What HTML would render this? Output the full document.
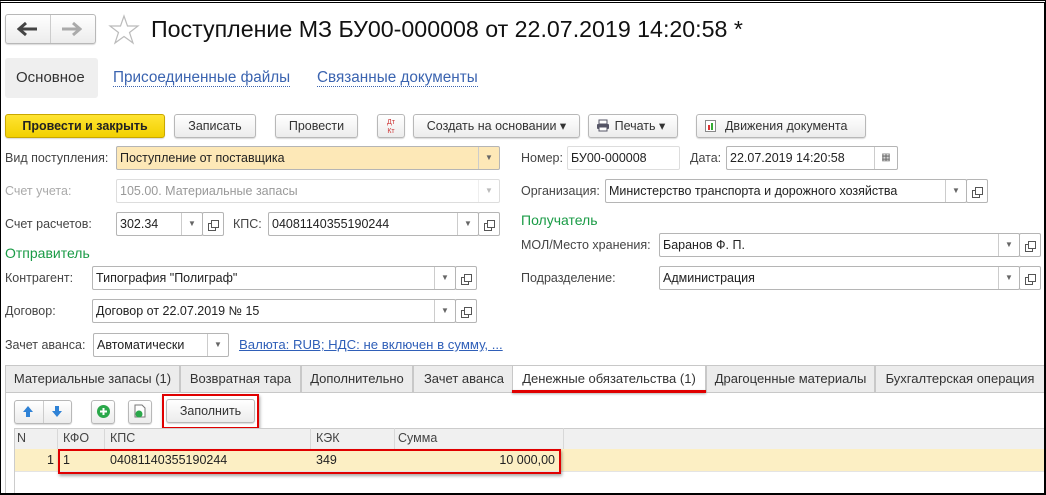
<!DOCTYPE html>
<html><head><meta charset="utf-8"><style>
*{box-sizing:border-box;margin:0;padding:0}
body{width:1046px;height:495px;overflow:hidden;background:#fff;font-family:"Liberation Sans",Arial,sans-serif;font-size:12.5px;color:#333;position:relative}
.a{position:absolute;white-space:nowrap}
.frame{position:absolute;left:0;top:0;width:1046px;height:495px;border:1px solid #000;border-top:3px double #000;border-right:2px solid #000;border-bottom:2px solid #000;pointer-events:none}
.btn{position:absolute;height:24px;border:1px solid #b8b8b8;border-radius:3px;background:linear-gradient(#fff,#ececec);box-shadow:0 1px 1px rgba(0,0,0,.15);text-align:center;line-height:22px;color:#333}
.fld{position:absolute;height:24px;border:1px solid #b5b5b5;border-radius:2px;background:#fff;line-height:22px;padding-left:3px;color:#222}
.dd{position:absolute;top:0;bottom:0;width:21px;border-left:1px solid #ccc;text-align:center;font-size:8px;line-height:22px;color:#666}
.op{position:absolute;width:22px;height:24px;border:1px solid #b5b5b5;border-radius:2px;background:#fff}
.op:after{content:"";position:absolute;left:8px;top:7px;width:6px;height:6px;border:1px solid #555;background:#fff}
.op:before{content:"";position:absolute;left:5px;top:10px;width:6px;height:6px;border:1px solid #555}
.lbl{position:absolute;line-height:24px;color:#444}
.green{color:#1a9b46;font-size:14px}
.tab{position:absolute;top:365px;height:28px;border:1px solid #c8c8c8;background:#ececec;line-height:26px;text-align:center;color:#333;font-size:13px}
.red{position:absolute;border:2px solid #e00000;box-shadow:1px 2px 3px rgba(0,0,0,.35)}
.th{position:absolute;top:428px;height:21px;line-height:21px;color:#444;border-right:1px solid #d8d8d8}
</style></head><body>
<div class="btn" style="left:5px;top:14px;width:91px;height:30px"></div>
<div class="a" style="left:50px;top:15px;width:1px;height:28px;background:#ccc"></div>
<svg class="a" style="left:17px;top:21px" width="22" height="16"><path d="M2 8H20M9 2L2 8L9 14" stroke="#444" stroke-width="3" fill="none"/></svg>
<svg class="a" style="left:60px;top:21px" width="22" height="16"><path d="M2 8H20M13 2L20 8L13 14" stroke="#aaa" stroke-width="3" fill="none"/></svg>
<svg class="a" style="left:108px;top:14px" width="32" height="31"><path d="M16 2L19.5 12H30L21.5 18.5L25 29L16 22.5L7 29L10.5 18.5L2 12H12.5Z" fill="none" stroke="#bbb" stroke-width="1.2"/></svg>
<div class="a" style="left:151px;top:16px;font-size:23.2px;color:#111">Поступление МЗ БУ00-000008 от 22.07.2019 14:20:58 *</div>
<div class="a" style="left:5px;top:58px;width:93px;height:40px;background:#efefef;border-radius:3px"></div>
<div class="a" style="left:16px;top:69px;font-size:15px;color:#333">Основное</div>
<div class="a" style="left:113px;top:69px;font-size:15.3px;color:#3b64b0;border-bottom:1px dotted #3b64b0;line-height:17px">Присоединенные файлы</div>
<div class="a" style="left:317px;top:69px;font-size:15.3px;color:#3b64b0;border-bottom:1px dotted #3b64b0;line-height:17px">Связанные документы</div>
<div class="btn" style="left:5px;top:114px;width:160px;background:linear-gradient(#ffe433,#f2d000);border-color:#c9a800;font-weight:bold;color:#222">Провести и закрыть</div>
<div class="btn" style="left:174px;top:114px;width:82px">Записать</div>
<div class="btn" style="left:275px;top:114px;width:83px">Провести</div>
<div class="btn" style="left:377px;top:114px;width:28px;font-size:7px;line-height:9px;padding-top:3px;color:#c33">Дт<br>Кт</div>
<div class="btn" style="left:413px;top:114px;width:167px">Создать на основании ▾</div>
<div class="btn" style="left:588px;top:114px;width:90px">&nbsp;&nbsp;&nbsp;&nbsp;Печать ▾</div>
<svg class="a" style="left:596px;top:119px" width="14" height="13"><rect x="3" y="1" width="8" height="4" fill="#fff" stroke="#556"/><rect x="1" y="5" width="12" height="5" rx="1" fill="#556"/><rect x="3" y="8" width="8" height="4" fill="#fff" stroke="#556"/></svg>
<div class="btn" style="left:696px;top:114px;width:170px">&nbsp;&nbsp;&nbsp;Движения документа</div>
<svg class="a" style="left:705px;top:120px" width="11" height="12"><rect x=".5" y=".5" width="10" height="11" fill="#fff" stroke="#888"/><rect x="3" y="5" width="2" height="5" fill="#d33"/><rect x="6" y="3" width="2" height="7" fill="#3a3"/></svg>
<div class="lbl" style="left:5px;top:146px">Вид поступления:</div>
<div class="fld" style="left:116px;top:146px;width:384px;background:#fde8b7">Поступление от поставщика<div class="dd" style="right:0">▼</div></div>
<div class="lbl" style="left:5px;top:179px;color:#aaa">Счет учета:</div>
<div class="fld" style="left:116px;top:179px;width:384px;color:#999;border-color:#ddd">105.00. Материальные запасы<div class="dd" style="right:0;border-color:#eee;color:#bbb">▼</div></div>
<div class="lbl" style="left:5px;top:212px">Счет расчетов:</div>
<div class="fld" style="left:116px;top:212px;width:87px">302.34<div class="dd" style="right:0">▼</div></div>
<div class="op" style="left:202px;top:212px"></div>
<div class="lbl" style="left:233px;top:212px">КПС:</div>
<div class="fld" style="left:268px;top:212px;width:211px">04081140355190244<div class="dd" style="right:0">▼</div></div>
<div class="op" style="left:478px;top:212px"></div>
<div class="a green" style="left:5px;top:245px">Отправитель</div>
<div class="lbl" style="left:5px;top:266px">Контрагент:</div>
<div class="fld" style="left:92px;top:266px;width:364px">Типография "Полиграф"<div class="dd" style="right:0">▼</div></div>
<div class="op" style="left:455px;top:266px"></div>
<div class="lbl" style="left:5px;top:299px">Договор:</div>
<div class="fld" style="left:92px;top:299px;width:364px">Договор от 22.07.2019 № 15<div class="dd" style="right:0">▼</div></div>
<div class="op" style="left:455px;top:299px"></div>
<div class="lbl" style="left:5px;top:333px">Зачет аванса:</div>
<div class="fld" style="left:93px;top:333px;width:136px">Автоматически<div class="dd" style="right:0">▼</div></div>
<div class="a" style="left:239px;top:337px;font-size:13.2px;color:#2f5fb8;text-decoration:underline">Валюта: RUB; НДС: не включен в сумму, ...</div>
<div class="lbl" style="left:521px;top:146px">Номер:</div>
<div class="fld" style="left:567px;top:146px;width:113px;border-color:#ddd">БУ00-000008</div>
<div class="lbl" style="left:690px;top:146px">Дата:</div>
<div class="fld" style="left:726px;top:146px;width:172px">22.07.2019 14:20:58<div class="dd" style="right:0;width:23px;font-size:10px">▦</div></div>
<div class="lbl" style="left:521px;top:179px">Организация:</div>
<div class="fld" style="left:605px;top:179px;width:362px">Министерство транспорта и дорожного хозяйства<div class="dd" style="right:0">▼</div></div>
<div class="op" style="left:966px;top:179px"></div>
<div class="a green" style="left:521px;top:212px">Получатель</div>
<div class="lbl" style="left:521px;top:233px">МОЛ/Место хранения:</div>
<div class="fld" style="left:659px;top:233px;width:361px">Баранов Ф. П.<div class="dd" style="right:0">▼</div></div>
<div class="op" style="left:1019px;top:233px"></div>
<div class="lbl" style="left:521px;top:266px">Подразделение:</div>
<div class="fld" style="left:659px;top:266px;width:361px">Администрация<div class="dd" style="right:0">▼</div></div>
<div class="op" style="left:1019px;top:266px"></div>
<div class="a" style="left:5px;top:392px;width:1040px;height:102px;border:1px solid #c8c8c8"></div>
<div class="tab" style="left:5px;width:175px">Материальные запасы (1)</div>
<div class="tab" style="left:180px;width:121px">Возвратная тара</div>
<div class="tab" style="left:301px;width:112px">Дополнительно</div>
<div class="tab" style="left:413px;width:102px">Зачет аванса</div>
<div class="tab" style="left:512px;width:194px;background:#fff;border-bottom-color:#fff">Денежные обязательства (1)</div>
<div class="tab" style="left:706px;width:169px">Драгоценные материалы</div>
<div class="tab" style="left:875px;width:170px">Бухгалтерская операция</div>
<div class="a" style="left:512px;top:390px;width:194px;height:3px;background:#e00000;box-shadow:0 1px 2px rgba(0,0,0,.3)"></div>
<div class="btn" style="left:14px;top:400px;width:58px"></div>
<div class="a" style="left:43px;top:401px;width:1px;height:22px;background:#ccc"></div>
<svg class="a" style="left:22px;top:405px" width="12" height="13"><path d="M6 1L11 7H8V12H4V7H1Z" fill="#2f82d6"/></svg>
<svg class="a" style="left:51px;top:405px" width="12" height="13"><path d="M6 12L11 6H8V1H4V6H1Z" fill="#2f82d6"/></svg>
<div class="btn" style="left:91px;top:400px;width:24px"></div>
<svg class="a" style="left:96px;top:404px" width="15" height="15"><circle cx="7.5" cy="7.5" r="6.5" fill="#2aa84a"/><path d="M7.5 4V11M4 7.5H11" stroke="#fff" stroke-width="2"/></svg>
<div class="btn" style="left:128px;top:400px;width:24px"></div>
<svg class="a" style="left:134px;top:404px" width="13" height="15"><path d="M1 1H8L11 4V13H1Z" fill="#fff" stroke="#777"/><circle cx="5" cy="10" r="3.5" fill="#2aa84a"/></svg>
<div class="btn" style="left:166px;top:399px;width:89px">Заполнить</div>
<div class="red" style="left:162px;top:394px;width:97px;height:35px"></div>
<div class="a" style="left:14px;top:428px;width:1030px;height:21px;background:#f0f0f0;border-top:1px solid #ccc"></div>
<div class="th" style="left:14px;width:44px;padding-left:3px">N</div>
<div class="th" style="left:58px;width:47px;padding-left:5px">КФО</div>
<div class="th" style="left:105px;width:206px;padding-left:5px">КПС</div>
<div class="th" style="left:311px;width:84px;padding-left:5px">КЭК</div>
<div class="th" style="left:395px;width:169px;padding-left:3px">Сумма</div>
<div class="a" style="left:14px;top:449px;width:1030px;height:23px;background:#fcefc4;border-bottom:1px solid #e4e4e4"></div>
<div class="a" style="left:14px;top:449px;width:44px;height:23px;text-align:right;padding-right:4px;line-height:23px;color:#222">1</div>
<div class="a" style="left:63px;top:449px;line-height:23px;color:#222">1</div>
<div class="a" style="left:110px;top:449px;line-height:23px;color:#222">04081140355190244</div>
<div class="a" style="left:316px;top:449px;line-height:23px;color:#222">349</div>
<div class="a" style="left:395px;top:449px;width:160px;text-align:right;line-height:23px;color:#222">10 000,00</div>
<div class="a" style="left:14px;top:428px;width:1px;height:65px;background:#ccc"></div>
<div class="red" style="left:58px;top:449px;width:503px;height:25px"></div>
<div class="frame"></div>
</body></html>
